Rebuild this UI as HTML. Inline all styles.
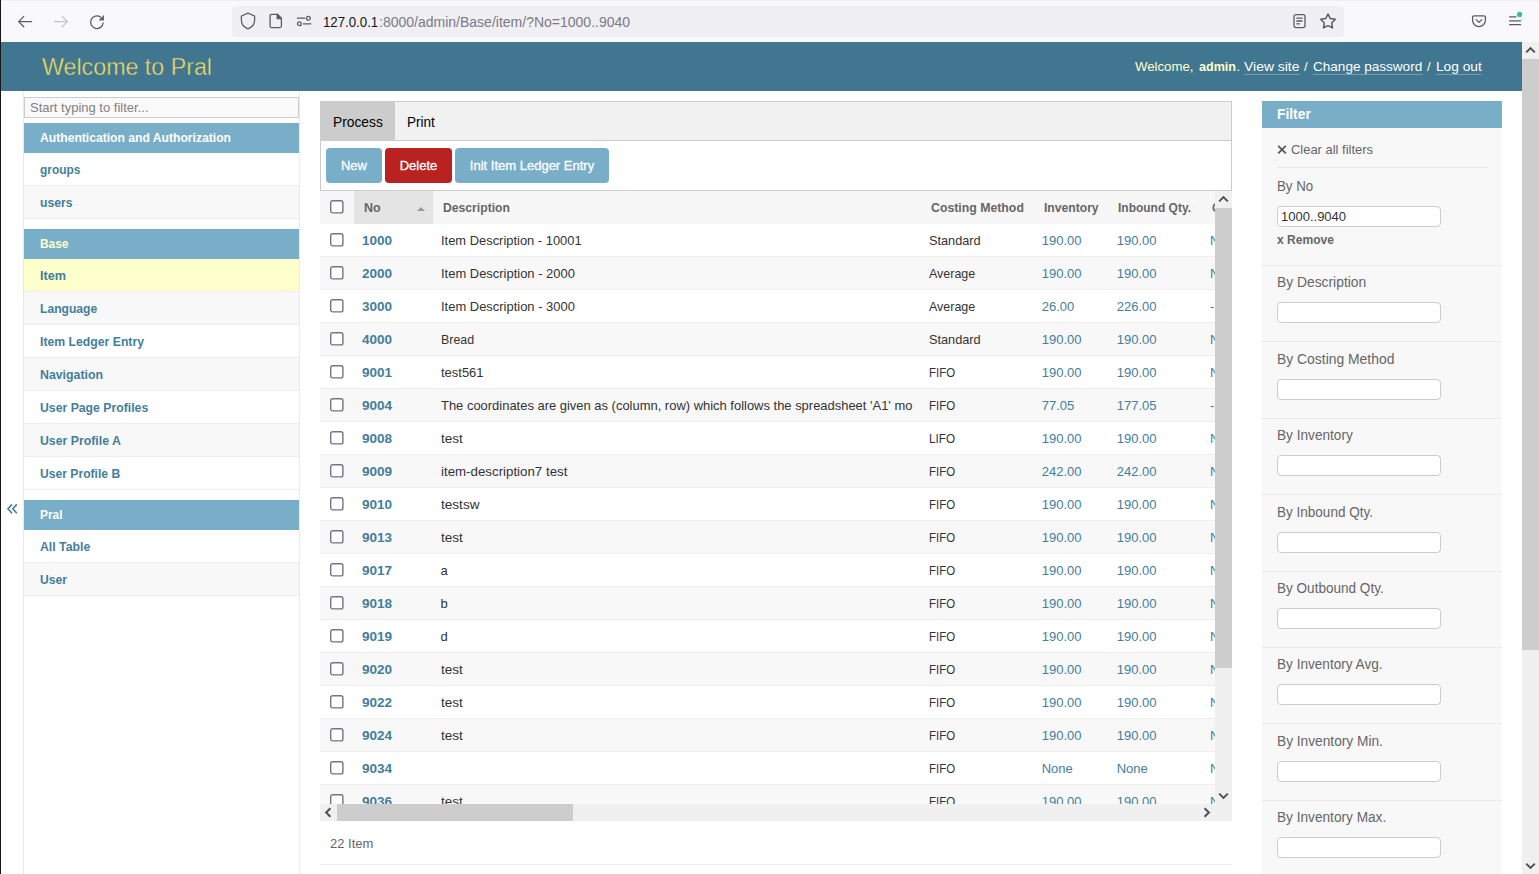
<!DOCTYPE html>
<html><head><meta charset="utf-8"><title>Select Item to change | Pral</title>
<style>
*{box-sizing:border-box;margin:0;padding:0}
html,body{width:1539px;height:874px;overflow:hidden;background:#fff}
body{font-family:"Liberation Sans",sans-serif;font-size:13px;color:#333;position:relative}
.abs{position:absolute}
.t{position:absolute;white-space:nowrap;line-height:1}
svg{position:absolute;overflow:visible}
/* browser chrome */
#chrome{left:0;top:0;width:1539px;height:42px;background:#f9f9fb}
#chrome-top{left:0;top:0;width:1539px;height:1px;background:#efeff2}
#urlbar{left:232px;top:6px;width:1112px;height:31px;background:#f0f0f4;border-radius:4px}
#leftedge{left:0;top:0;width:1px;height:874px;background:#161616}
/* header */
#header{left:1px;top:42px;width:1521px;height:49px;background:#417690}
/* page scrollbar */
#pscroll{left:1522px;top:42px;width:17px;height:832px;background:#f0f0f0}
#pthumb{left:1522px;top:59px;width:17px;height:591px;background:#cdcdcd}
/* sidebar */
#side{left:23px;top:91px;width:277px;height:783px;border-left:1px solid #eaeaea;border-right:1px solid #eaeaea;background:#fff}
.cap{position:absolute;left:24px;width:275px;height:30px;background:#79aec8}
.row{position:absolute;left:24px;width:275px;height:33px;border-bottom:1px solid #eee;background:#fff}
.row.alt{background:#f8f8f8}
.row.sel{background:#ffffcc}
.lnk{color:#447e9b;font-weight:bold}
.ul{padding-bottom:1px;border-bottom:1px solid rgba(255,255,255,.3);}
</style></head>
<body>
<div class="abs" id="chrome"></div><div class="abs" id="chrome-top"></div><div class="abs" id="urlbar"></div>
<svg style="left:17px;top:14px" width="16" height="16" viewBox="0 0 16 16" fill="none" stroke="#5b5b66" stroke-width="1.3" stroke-linecap="round" stroke-linejoin="round"><path d="M14.6 7.6H1.6M6.8 2.4 1.6 7.6 6.8 12.8"/></svg>
<svg style="left:53px;top:14px" width="16" height="16" viewBox="0 0 16 16" fill="none" stroke="#c4c4ca" stroke-width="1.3" stroke-linecap="round" stroke-linejoin="round"><path d="M1.4 7.6h13M9.200 2.400l5.200 5.200-5.200 5.200"/></svg>
<svg style="left:89px;top:14px" width="16" height="16" viewBox="0 0 16 16" fill="none" stroke="#5b5b66" stroke-width="1.3" stroke-linecap="round"><path d="M14.200 8.800A6.300 6.300 0 1 1 11.600 3.100"/><path d="M14.900 1v5.400H9.500z" fill="#5b5b66" stroke="none"/></svg>
<svg style="left:240px;top:12px" width="16" height="18" viewBox="0 0 16 18" fill="none" stroke="#5b5b66" stroke-width="1.3" stroke-linejoin="round"><path d="M8 1.2 1.4 4v4.2c0 4 2.6 7 6.6 8.6 4-1.6 6.600-4.6 6.600-8.600V4z"/></svg>
<svg style="left:269px;top:13px" width="14" height="16" viewBox="0 0 14 16" fill="none" stroke="#5b5b66" stroke-width="1.3" stroke-linejoin="round"><path d="M2.600 1.300h5.600L12.400 5.500v7.600a1.500 1.500 0 0 1-1.500 1.500H2.600A1.500 1.500 0 0 1 1.100 13.100V2.800A1.500 1.500 0 0 1 2.600 1.300z"/><path d="M8.200 1.300v4.200h4.200z" fill="#5b5b66"/></svg>
<svg style="left:296px;top:14px" width="16" height="14" viewBox="0 0 16 14" fill="none" stroke="#5b5b66" stroke-width="1.3" stroke-linecap="round"><path d="M1.400 4.200h7.400"/><circle cx="12.400" cy="4.200" r="1.900"/><path d="M7.400 9.800h7.400"/><circle cx="3.400" cy="9.800" r="1.900"/></svg>
<div class="t " style="left:323.2px;top:15px;font-size:14px;color:#15141a;transform:scaleX(0.9454);transform-origin:0 0;">127.0.0.1</div>
<div class="t " style="left:379.3px;top:15px;font-size:14px;color:#7a7a85;transform:scaleX(1.0003);transform-origin:0 0;">:8000/admin/Base/item/?No=1000..9040</div>
<svg style="left:1292px;top:13px" width="15" height="16" viewBox="0 0 15 16" fill="none" stroke="#5b5b66" stroke-width="1.3" stroke-linecap="round" stroke-linejoin="round"><rect x="2" y="1.600" width="11" height="13" rx="2"/><path d="M4.800 5.200h5.200M4.800 8h5.200M4.800 10.800h2.800"/></svg>
<svg style="left:1319px;top:12px" width="18" height="18" viewBox="0 0 18 18" fill="none" stroke="#5b5b66" stroke-width="1.500" stroke-linejoin="round"><path d="M9.00 2.00 L11.29 6.54 L16.32 7.32 L12.71 10.91 L13.53 15.93 L9.00 13.60 L4.47 15.93 L5.29 10.91 L1.68 7.32 L6.71 6.54z"/></svg>
<svg style="left:1471px;top:14px" width="16" height="15" viewBox="0 0 16 15" fill="none" stroke="#5b5b66" stroke-width="1.300" stroke-linecap="round" stroke-linejoin="round"><path d="M3 1.800h10a1.400 1.400 0 0 1 1.400 1.400v3a6.400 6.400 0 0 1-12.800 0v-3A1.400 1.400 0 0 1 3 1.800z"/><path d="M5.200 5.600l2.800 2.800 2.800-2.800"/></svg>
<svg style="left:1508px;top:12px" width="16" height="16" viewBox="0 0 16 16" fill="none" stroke="#5b5b66" stroke-width="1.300" stroke-linecap="round"><path d="M1.600 4.800h6.400M1.600 8.800h11M1.600 12.700h11"/><circle cx="11.600" cy="2.400" r="2.600" fill="#2ac3a2" stroke="none"/></svg>
<div class="abs" id="header"></div>
<div class="t " style="left:41.5px;top:55px;font-size:24px;color:#f5dd5d;transform:scaleX(0.9680);transform-origin:0 0;-webkit-text-stroke:0.450px #417690;">Welcome to Pral</div>
<div class="t " style="left:1135px;top:60px;font-size:13px;color:#ffc;transform:scaleX(1.0163);transform-origin:0 0;">Welcome,</div>
<div class="t " style="left:1198.5px;top:60px;font-size:13px;color:#ffc;font-weight:bold;transform:scaleX(0.9661);transform-origin:0 0;">admin</div>
<div class="t " style="left:1236.5px;top:60px;font-size:13px;color:#ffc;">.</div>
<div class="t ul" style="left:1243.5px;top:60px;font-size:13px;color:#fff;transform:scaleX(1.0715);transform-origin:0 0;">View site</div>
<div class="t " style="left:1304px;top:60px;font-size:13px;color:#ffc;">/</div>
<div class="t ul" style="left:1312.5px;top:60px;font-size:13px;color:#fff;transform:scaleX(1.0420);transform-origin:0 0;">Change password</div>
<div class="t " style="left:1427px;top:60px;font-size:13px;color:#ffc;">/</div>
<div class="t ul" style="left:1436px;top:60px;font-size:13px;color:#fff;transform:scaleX(1.0536);transform-origin:0 0;">Log out</div>
<div class="abs" id="pscroll"></div><div class="abs" id="pthumb"></div>
<svg style="left:1525px;top:46px" width="11" height="8" viewBox="0 0 11 8" fill="none" stroke="#505050" stroke-width="2"><path d="M1.200 6.400 5.500 2.100 9.800 6.400"/></svg>
<svg style="left:1525px;top:862px" width="11" height="8" viewBox="0 0 11 8" fill="none" stroke="#505050" stroke-width="2"><path d="M1.200 1.600 5.500 5.900 9.800 1.600"/></svg>
<div class="abs" id="side"></div>
<div class="abs" style="left:24px;top:97px;width:275px;height:21px;border:1px solid #ccc;background:#fafafa"></div>
<div class="t " style="left:30px;top:101px;font-size:13px;color:#808080;">Start typing to filter...</div>
<div class="cap" style="top:123px"></div>
<div class="t " style="left:40px;top:131px;font-size:13px;color:#fff;font-weight:bold;transform:scaleX(0.9334);transform-origin:0 0;">Authentication and Authorization</div>
<div class="row" style="top:153px"></div>
<div class="t " style="left:40px;top:163px;font-size:13px;color:#447e9b;font-weight:bold;transform:scaleX(0.9191);transform-origin:0 0;">groups</div>
<div class="row alt" style="top:186px"></div>
<div class="t " style="left:40px;top:196px;font-size:13px;color:#447e9b;font-weight:bold;transform:scaleX(0.9365);transform-origin:0 0;">users</div>
<div class="cap" style="top:229px"></div>
<div class="t " style="left:40px;top:237px;font-size:13px;color:#ffc;font-weight:bold;transform:scaleX(0.9170);transform-origin:0 0;">Base</div>
<div class="row sel" style="top:259px"></div>
<div class="t " style="left:40px;top:269px;font-size:13px;color:#447e9b;font-weight:bold;transform:scaleX(0.9725);transform-origin:0 0;">Item</div>
<div class="row alt" style="top:292px"></div>
<div class="t " style="left:40px;top:302px;font-size:13px;color:#447e9b;font-weight:bold;transform:scaleX(0.9315);transform-origin:0 0;">Language</div>
<div class="row" style="top:325px"></div>
<div class="t " style="left:40px;top:335px;font-size:13px;color:#447e9b;font-weight:bold;transform:scaleX(0.9409);transform-origin:0 0;">Item Ledger Entry</div>
<div class="row alt" style="top:358px"></div>
<div class="t " style="left:40px;top:368px;font-size:13px;color:#447e9b;font-weight:bold;transform:scaleX(0.9478);transform-origin:0 0;">Navigation</div>
<div class="row" style="top:391px"></div>
<div class="t " style="left:40px;top:401px;font-size:13px;color:#447e9b;font-weight:bold;transform:scaleX(0.9418);transform-origin:0 0;">User Page Profiles</div>
<div class="row alt" style="top:424px"></div>
<div class="t " style="left:40px;top:434px;font-size:13px;color:#447e9b;font-weight:bold;transform:scaleX(0.9450);transform-origin:0 0;">User Profile A</div>
<div class="row" style="top:457px"></div>
<div class="t " style="left:40px;top:467px;font-size:13px;color:#447e9b;font-weight:bold;transform:scaleX(0.9327);transform-origin:0 0;">User Profile B</div>
<div class="cap" style="top:500px"></div>
<div class="t " style="left:40px;top:508px;font-size:13px;color:#fff;font-weight:bold;transform:scaleX(0.9154);transform-origin:0 0;">Pral</div>
<div class="row" style="top:530px"></div>
<div class="t " style="left:40px;top:540px;font-size:13px;color:#447e9b;font-weight:bold;transform:scaleX(0.9433);transform-origin:0 0;">All Table</div>
<div class="row alt" style="top:563px"></div>
<div class="t " style="left:40px;top:573px;font-size:13px;color:#447e9b;font-weight:bold;transform:scaleX(0.9335);transform-origin:0 0;">User</div>
<svg style="left:0;top:500px" width="24" height="18" viewBox="0 0 24 18" fill="none" stroke="#447e9b" stroke-width="1.600"><path d="M12 4.400 8 8.800 12 13.200M16.800 4.400 12.800 8.800 16.800 13.200"/></svg>
<div class="abs " style="left:320px;top:101px;width:912px;height:40px;background:#f1f1f1;border:1px solid #ccc;"></div>
<div class="abs " style="left:321px;top:102px;width:74px;height:38px;background:#ccc;"></div>
<div class="t " style="left:333px;top:114px;font-size:15px;color:#000;transform:scaleX(0.9190);transform-origin:0 0;">Process</div>
<div class="t " style="left:407px;top:114px;font-size:15px;color:#000;transform:scaleX(0.9013);transform-origin:0 0;">Print</div>
<div class="abs " style="left:320px;top:140px;width:912px;height:51px;background:#fff;border:1px solid #ccc;"></div>
<div class="abs" style="left:326px;top:148px;width:56px;height:35px;background:#79aec8;border-radius:4px;color:#fff;font-size:13px;text-align:center;line-height:35px;-webkit-text-stroke:0.300px #fff">New</div>
<div class="abs" style="left:385px;top:148px;width:67px;height:35px;background:#ba2121;border-radius:4px;color:#fff;font-size:13px;text-align:center;line-height:35px;-webkit-text-stroke:0.300px #fff">Delete</div>
<div class="abs" style="left:455px;top:148px;width:154px;height:35px;background:#79aec8;border-radius:4px;color:#fff;font-size:13px;text-align:center;line-height:35px;-webkit-text-stroke:0.300px #fff">Init Item Ledger Entry</div>
<div class="abs" id="tbl" style="left:320px;top:191px;width:895px;height:613px;overflow:hidden">
<div class="abs" style="left:0;top:0;width:895px;height:33px;background:#f7f7f7"></div>
<div class="abs" style="left:34px;top:0;width:79px;height:33px;background:#e4e4e4"></div>
<svg style="left:10.3px;top:9.4px" width="14" height="14" viewBox="0 0 14 14"><rect x="0.700" y="0.700" width="12.200" height="12.200" rx="2" fill="#fff" stroke="#74738a" stroke-width="1.400"/></svg>
<div class="t " style="left:44.39999999999998px;top:11px;font-size:12px;color:#666;font-weight:bold;transform:scaleX(1.0375);transform-origin:0 0;">No</div>
<div class="t " style="left:122.5px;top:11px;font-size:12px;color:#666;font-weight:bold;transform:scaleX(1.0149);transform-origin:0 0;">Description</div>
<div class="t " style="left:610.5px;top:11px;font-size:12px;color:#666;font-weight:bold;transform:scaleX(1.0248);transform-origin:0 0;">Costing Method</div>
<div class="t " style="left:723.5999999999999px;top:11px;font-size:12px;color:#666;font-weight:bold;transform:scaleX(1.0108);transform-origin:0 0;">Inventory</div>
<div class="t " style="left:798.4000000000001px;top:11px;font-size:12px;color:#666;font-weight:bold;transform:scaleX(0.9985);transform-origin:0 0;">Inbound Qty.</div>
<div class="t " style="left:891.5px;top:11px;font-size:12px;color:#666;font-weight:bold;transform:scaleX(0.9507);transform-origin:0 0;">Outbound Qty.</div>
<div class="abs" style="left:97px;top:16px;width:0;height:0;border-left:4px solid transparent;border-right:4px solid transparent;border-bottom:4px solid #999"></div>
<div class="abs" style="left:0;top:33px;width:895px;height:33px;background:#fff;border-bottom:1px solid #eee"></div>
<svg style="left:10.3px;top:42.4px" width="14" height="14" viewBox="0 0 14 14"><rect x="0.700" y="0.700" width="12.200" height="12.200" rx="2" fill="#fff" stroke="#74738a" stroke-width="1.400"/></svg>
<div class="t " style="left:41.69999999999999px;top:43px;font-size:13px;color:#447e9b;font-weight:bold;transform:scaleX(1.0407);transform-origin:0 0;">1000</div>
<div class="t " style="left:120.60000000000002px;top:43px;font-size:13px;color:#333;transform:scaleX(0.9928);transform-origin:0 0;">Item Description - 10001</div>
<div class="t " style="left:608.6px;top:43px;font-size:13px;color:#333;transform:scaleX(0.9798);transform-origin:0 0;">Standard</div>
<div class="t" style="left:721.7px;top:43px;font-size:13px;color:#447e9b">190.00</div>
<div class="t" style="left:796.7px;top:43px;font-size:13px;color:#447e9b">190.00</div>
<div class="t" style="left:890px;top:43px;font-size:13px;color:#447e9b">None</div>
<div class="abs" style="left:0;top:66px;width:895px;height:33px;background:#f8f8f8;border-bottom:1px solid #eee"></div>
<svg style="left:10.3px;top:75.4px" width="14" height="14" viewBox="0 0 14 14"><rect x="0.700" y="0.700" width="12.200" height="12.200" rx="2" fill="#fff" stroke="#74738a" stroke-width="1.400"/></svg>
<div class="t " style="left:41.69999999999999px;top:76px;font-size:13px;color:#447e9b;font-weight:bold;transform:scaleX(1.0407);transform-origin:0 0;">2000</div>
<div class="t " style="left:120.60000000000002px;top:76px;font-size:13px;color:#333;transform:scaleX(0.9962);transform-origin:0 0;">Item Description - 2000</div>
<div class="t " style="left:608.6px;top:76px;font-size:13px;color:#333;transform:scaleX(0.9588);transform-origin:0 0;">Average</div>
<div class="t" style="left:721.7px;top:76px;font-size:13px;color:#447e9b">190.00</div>
<div class="t" style="left:796.7px;top:76px;font-size:13px;color:#447e9b">190.00</div>
<div class="t" style="left:890px;top:76px;font-size:13px;color:#447e9b">None</div>
<div class="abs" style="left:0;top:99px;width:895px;height:33px;background:#fff;border-bottom:1px solid #eee"></div>
<svg style="left:10.3px;top:108.4px" width="14" height="14" viewBox="0 0 14 14"><rect x="0.700" y="0.700" width="12.200" height="12.200" rx="2" fill="#fff" stroke="#74738a" stroke-width="1.400"/></svg>
<div class="t " style="left:41.69999999999999px;top:109px;font-size:13px;color:#447e9b;font-weight:bold;transform:scaleX(1.0407);transform-origin:0 0;">3000</div>
<div class="t " style="left:120.60000000000002px;top:109px;font-size:13px;color:#333;transform:scaleX(0.9962);transform-origin:0 0;">Item Description - 3000</div>
<div class="t " style="left:608.6px;top:109px;font-size:13px;color:#333;transform:scaleX(0.9588);transform-origin:0 0;">Average</div>
<div class="t" style="left:721.7px;top:109px;font-size:13px;color:#447e9b">26.00</div>
<div class="t" style="left:796.7px;top:109px;font-size:13px;color:#447e9b">226.00</div>
<div class="t" style="left:890px;top:109px;font-size:13px;color:#447e9b">-200.00</div>
<div class="abs" style="left:0;top:132px;width:895px;height:33px;background:#f8f8f8;border-bottom:1px solid #eee"></div>
<svg style="left:10.3px;top:141.4px" width="14" height="14" viewBox="0 0 14 14"><rect x="0.700" y="0.700" width="12.200" height="12.200" rx="2" fill="#fff" stroke="#74738a" stroke-width="1.400"/></svg>
<div class="t " style="left:41.69999999999999px;top:142px;font-size:13px;color:#447e9b;font-weight:bold;transform:scaleX(1.0407);transform-origin:0 0;">4000</div>
<div class="t " style="left:120.60000000000002px;top:142px;font-size:13px;color:#333;transform:scaleX(0.9538);transform-origin:0 0;">Bread</div>
<div class="t " style="left:608.6px;top:142px;font-size:13px;color:#333;transform:scaleX(0.9798);transform-origin:0 0;">Standard</div>
<div class="t" style="left:721.7px;top:142px;font-size:13px;color:#447e9b">190.00</div>
<div class="t" style="left:796.7px;top:142px;font-size:13px;color:#447e9b">190.00</div>
<div class="t" style="left:890px;top:142px;font-size:13px;color:#447e9b">None</div>
<div class="abs" style="left:0;top:165px;width:895px;height:33px;background:#fff;border-bottom:1px solid #eee"></div>
<svg style="left:10.3px;top:174.4px" width="14" height="14" viewBox="0 0 14 14"><rect x="0.700" y="0.700" width="12.200" height="12.200" rx="2" fill="#fff" stroke="#74738a" stroke-width="1.400"/></svg>
<div class="t " style="left:41.69999999999999px;top:175px;font-size:13px;color:#447e9b;font-weight:bold;transform:scaleX(1.0407);transform-origin:0 0;">9001</div>
<div class="t " style="left:120.60000000000002px;top:175px;font-size:13px;color:#333;transform:scaleX(0.9963);transform-origin:0 0;">test561</div>
<div class="t " style="left:608.6px;top:175px;font-size:13px;color:#333;transform:scaleX(0.8815);transform-origin:0 0;">FIFO</div>
<div class="t" style="left:721.7px;top:175px;font-size:13px;color:#447e9b">190.00</div>
<div class="t" style="left:796.7px;top:175px;font-size:13px;color:#447e9b">190.00</div>
<div class="t" style="left:890px;top:175px;font-size:13px;color:#447e9b">None</div>
<div class="abs" style="left:0;top:198px;width:895px;height:33px;background:#f8f8f8;border-bottom:1px solid #eee"></div>
<svg style="left:10.3px;top:207.4px" width="14" height="14" viewBox="0 0 14 14"><rect x="0.700" y="0.700" width="12.200" height="12.200" rx="2" fill="#fff" stroke="#74738a" stroke-width="1.400"/></svg>
<div class="t " style="left:41.69999999999999px;top:208px;font-size:13px;color:#447e9b;font-weight:bold;transform:scaleX(1.0407);transform-origin:0 0;">9004</div>
<div class="t " style="left:120.60000000000002px;top:208px;font-size:13px;color:#333;transform:scaleX(0.9962);transform-origin:0 0;">The coordinates are given as (column, row) which follows the spreadsheet 'A1' mo</div>
<div class="t " style="left:608.6px;top:208px;font-size:13px;color:#333;transform:scaleX(0.8815);transform-origin:0 0;">FIFO</div>
<div class="t" style="left:721.7px;top:208px;font-size:13px;color:#447e9b">77.05</div>
<div class="t" style="left:796.7px;top:208px;font-size:13px;color:#447e9b">177.05</div>
<div class="t" style="left:890px;top:208px;font-size:13px;color:#447e9b">-100.00</div>
<div class="abs" style="left:0;top:231px;width:895px;height:33px;background:#fff;border-bottom:1px solid #eee"></div>
<svg style="left:10.3px;top:240.4px" width="14" height="14" viewBox="0 0 14 14"><rect x="0.700" y="0.700" width="12.200" height="12.200" rx="2" fill="#fff" stroke="#74738a" stroke-width="1.400"/></svg>
<div class="t " style="left:41.69999999999999px;top:241px;font-size:13px;color:#447e9b;font-weight:bold;transform:scaleX(1.0407);transform-origin:0 0;">9008</div>
<div class="t " style="left:120.60000000000002px;top:241px;font-size:13px;color:#333;transform:scaleX(1.0396);transform-origin:0 0;">test</div>
<div class="t " style="left:608.6px;top:241px;font-size:13px;color:#333;transform:scaleX(0.9029);transform-origin:0 0;">LIFO</div>
<div class="t" style="left:721.7px;top:241px;font-size:13px;color:#447e9b">190.00</div>
<div class="t" style="left:796.7px;top:241px;font-size:13px;color:#447e9b">190.00</div>
<div class="t" style="left:890px;top:241px;font-size:13px;color:#447e9b">None</div>
<div class="abs" style="left:0;top:264px;width:895px;height:33px;background:#f8f8f8;border-bottom:1px solid #eee"></div>
<svg style="left:10.3px;top:273.4px" width="14" height="14" viewBox="0 0 14 14"><rect x="0.700" y="0.700" width="12.200" height="12.200" rx="2" fill="#fff" stroke="#74738a" stroke-width="1.400"/></svg>
<div class="t " style="left:41.69999999999999px;top:274px;font-size:13px;color:#447e9b;font-weight:bold;transform:scaleX(1.0407);transform-origin:0 0;">9009</div>
<div class="t " style="left:120.60000000000002px;top:274px;font-size:13px;color:#333;transform:scaleX(1.0230);transform-origin:0 0;">item-description7 test</div>
<div class="t " style="left:608.6px;top:274px;font-size:13px;color:#333;transform:scaleX(0.8815);transform-origin:0 0;">FIFO</div>
<div class="t" style="left:721.7px;top:274px;font-size:13px;color:#447e9b">242.00</div>
<div class="t" style="left:796.7px;top:274px;font-size:13px;color:#447e9b">242.00</div>
<div class="t" style="left:890px;top:274px;font-size:13px;color:#447e9b">None</div>
<div class="abs" style="left:0;top:297px;width:895px;height:33px;background:#fff;border-bottom:1px solid #eee"></div>
<svg style="left:10.3px;top:306.4px" width="14" height="14" viewBox="0 0 14 14"><rect x="0.700" y="0.700" width="12.200" height="12.200" rx="2" fill="#fff" stroke="#74738a" stroke-width="1.400"/></svg>
<div class="t " style="left:41.69999999999999px;top:307px;font-size:13px;color:#447e9b;font-weight:bold;transform:scaleX(1.0407);transform-origin:0 0;">9010</div>
<div class="t " style="left:120.60000000000002px;top:307px;font-size:13px;color:#333;transform:scaleX(1.0450);transform-origin:0 0;">testsw</div>
<div class="t " style="left:608.6px;top:307px;font-size:13px;color:#333;transform:scaleX(0.8815);transform-origin:0 0;">FIFO</div>
<div class="t" style="left:721.7px;top:307px;font-size:13px;color:#447e9b">190.00</div>
<div class="t" style="left:796.7px;top:307px;font-size:13px;color:#447e9b">190.00</div>
<div class="t" style="left:890px;top:307px;font-size:13px;color:#447e9b">None</div>
<div class="abs" style="left:0;top:330px;width:895px;height:33px;background:#f8f8f8;border-bottom:1px solid #eee"></div>
<svg style="left:10.3px;top:339.4px" width="14" height="14" viewBox="0 0 14 14"><rect x="0.700" y="0.700" width="12.200" height="12.200" rx="2" fill="#fff" stroke="#74738a" stroke-width="1.400"/></svg>
<div class="t " style="left:41.69999999999999px;top:340px;font-size:13px;color:#447e9b;font-weight:bold;transform:scaleX(1.0407);transform-origin:0 0;">9013</div>
<div class="t " style="left:120.60000000000002px;top:340px;font-size:13px;color:#333;transform:scaleX(1.0396);transform-origin:0 0;">test</div>
<div class="t " style="left:608.6px;top:340px;font-size:13px;color:#333;transform:scaleX(0.8815);transform-origin:0 0;">FIFO</div>
<div class="t" style="left:721.7px;top:340px;font-size:13px;color:#447e9b">190.00</div>
<div class="t" style="left:796.7px;top:340px;font-size:13px;color:#447e9b">190.00</div>
<div class="t" style="left:890px;top:340px;font-size:13px;color:#447e9b">None</div>
<div class="abs" style="left:0;top:363px;width:895px;height:33px;background:#fff;border-bottom:1px solid #eee"></div>
<svg style="left:10.3px;top:372.4px" width="14" height="14" viewBox="0 0 14 14"><rect x="0.700" y="0.700" width="12.200" height="12.200" rx="2" fill="#fff" stroke="#74738a" stroke-width="1.400"/></svg>
<div class="t " style="left:41.69999999999999px;top:373px;font-size:13px;color:#447e9b;font-weight:bold;transform:scaleX(1.0407);transform-origin:0 0;">9017</div>
<div class="t " style="left:120.60000000000002px;top:373px;font-size:13px;color:#333;">a</div>
<div class="t " style="left:608.6px;top:373px;font-size:13px;color:#333;transform:scaleX(0.8815);transform-origin:0 0;">FIFO</div>
<div class="t" style="left:721.7px;top:373px;font-size:13px;color:#447e9b">190.00</div>
<div class="t" style="left:796.7px;top:373px;font-size:13px;color:#447e9b">190.00</div>
<div class="t" style="left:890px;top:373px;font-size:13px;color:#447e9b">None</div>
<div class="abs" style="left:0;top:396px;width:895px;height:33px;background:#f8f8f8;border-bottom:1px solid #eee"></div>
<svg style="left:10.3px;top:405.4px" width="14" height="14" viewBox="0 0 14 14"><rect x="0.700" y="0.700" width="12.200" height="12.200" rx="2" fill="#fff" stroke="#74738a" stroke-width="1.400"/></svg>
<div class="t " style="left:41.69999999999999px;top:406px;font-size:13px;color:#447e9b;font-weight:bold;transform:scaleX(1.0407);transform-origin:0 0;">9018</div>
<div class="t " style="left:120.60000000000002px;top:406px;font-size:13px;color:#333;">b</div>
<div class="t " style="left:608.6px;top:406px;font-size:13px;color:#333;transform:scaleX(0.8815);transform-origin:0 0;">FIFO</div>
<div class="t" style="left:721.7px;top:406px;font-size:13px;color:#447e9b">190.00</div>
<div class="t" style="left:796.7px;top:406px;font-size:13px;color:#447e9b">190.00</div>
<div class="t" style="left:890px;top:406px;font-size:13px;color:#447e9b">None</div>
<div class="abs" style="left:0;top:429px;width:895px;height:33px;background:#fff;border-bottom:1px solid #eee"></div>
<svg style="left:10.3px;top:438.4px" width="14" height="14" viewBox="0 0 14 14"><rect x="0.700" y="0.700" width="12.200" height="12.200" rx="2" fill="#fff" stroke="#74738a" stroke-width="1.400"/></svg>
<div class="t " style="left:41.69999999999999px;top:439px;font-size:13px;color:#447e9b;font-weight:bold;transform:scaleX(1.0407);transform-origin:0 0;">9019</div>
<div class="t " style="left:120.60000000000002px;top:439px;font-size:13px;color:#333;">d</div>
<div class="t " style="left:608.6px;top:439px;font-size:13px;color:#333;transform:scaleX(0.8815);transform-origin:0 0;">FIFO</div>
<div class="t" style="left:721.7px;top:439px;font-size:13px;color:#447e9b">190.00</div>
<div class="t" style="left:796.7px;top:439px;font-size:13px;color:#447e9b">190.00</div>
<div class="t" style="left:890px;top:439px;font-size:13px;color:#447e9b">None</div>
<div class="abs" style="left:0;top:462px;width:895px;height:33px;background:#f8f8f8;border-bottom:1px solid #eee"></div>
<svg style="left:10.3px;top:471.4px" width="14" height="14" viewBox="0 0 14 14"><rect x="0.700" y="0.700" width="12.200" height="12.200" rx="2" fill="#fff" stroke="#74738a" stroke-width="1.400"/></svg>
<div class="t " style="left:41.69999999999999px;top:472px;font-size:13px;color:#447e9b;font-weight:bold;transform:scaleX(1.0407);transform-origin:0 0;">9020</div>
<div class="t " style="left:120.60000000000002px;top:472px;font-size:13px;color:#333;transform:scaleX(1.0396);transform-origin:0 0;">test</div>
<div class="t " style="left:608.6px;top:472px;font-size:13px;color:#333;transform:scaleX(0.8815);transform-origin:0 0;">FIFO</div>
<div class="t" style="left:721.7px;top:472px;font-size:13px;color:#447e9b">190.00</div>
<div class="t" style="left:796.7px;top:472px;font-size:13px;color:#447e9b">190.00</div>
<div class="t" style="left:890px;top:472px;font-size:13px;color:#447e9b">None</div>
<div class="abs" style="left:0;top:495px;width:895px;height:33px;background:#fff;border-bottom:1px solid #eee"></div>
<svg style="left:10.3px;top:504.4px" width="14" height="14" viewBox="0 0 14 14"><rect x="0.700" y="0.700" width="12.200" height="12.200" rx="2" fill="#fff" stroke="#74738a" stroke-width="1.400"/></svg>
<div class="t " style="left:41.69999999999999px;top:505px;font-size:13px;color:#447e9b;font-weight:bold;transform:scaleX(1.0407);transform-origin:0 0;">9022</div>
<div class="t " style="left:120.60000000000002px;top:505px;font-size:13px;color:#333;transform:scaleX(1.0396);transform-origin:0 0;">test</div>
<div class="t " style="left:608.6px;top:505px;font-size:13px;color:#333;transform:scaleX(0.8815);transform-origin:0 0;">FIFO</div>
<div class="t" style="left:721.7px;top:505px;font-size:13px;color:#447e9b">190.00</div>
<div class="t" style="left:796.7px;top:505px;font-size:13px;color:#447e9b">190.00</div>
<div class="t" style="left:890px;top:505px;font-size:13px;color:#447e9b">None</div>
<div class="abs" style="left:0;top:528px;width:895px;height:33px;background:#f8f8f8;border-bottom:1px solid #eee"></div>
<svg style="left:10.3px;top:537.4px" width="14" height="14" viewBox="0 0 14 14"><rect x="0.700" y="0.700" width="12.200" height="12.200" rx="2" fill="#fff" stroke="#74738a" stroke-width="1.400"/></svg>
<div class="t " style="left:41.69999999999999px;top:538px;font-size:13px;color:#447e9b;font-weight:bold;transform:scaleX(1.0407);transform-origin:0 0;">9024</div>
<div class="t " style="left:120.60000000000002px;top:538px;font-size:13px;color:#333;transform:scaleX(1.0396);transform-origin:0 0;">test</div>
<div class="t " style="left:608.6px;top:538px;font-size:13px;color:#333;transform:scaleX(0.8815);transform-origin:0 0;">FIFO</div>
<div class="t" style="left:721.7px;top:538px;font-size:13px;color:#447e9b">190.00</div>
<div class="t" style="left:796.7px;top:538px;font-size:13px;color:#447e9b">190.00</div>
<div class="t" style="left:890px;top:538px;font-size:13px;color:#447e9b">None</div>
<div class="abs" style="left:0;top:561px;width:895px;height:33px;background:#fff;border-bottom:1px solid #eee"></div>
<svg style="left:10.3px;top:570.4px" width="14" height="14" viewBox="0 0 14 14"><rect x="0.700" y="0.700" width="12.200" height="12.200" rx="2" fill="#fff" stroke="#74738a" stroke-width="1.400"/></svg>
<div class="t " style="left:41.69999999999999px;top:571px;font-size:13px;color:#447e9b;font-weight:bold;transform:scaleX(1.0407);transform-origin:0 0;">9034</div>
<div class="t " style="left:120.60000000000002px;top:571px;font-size:13px;color:#333;"></div>
<div class="t " style="left:608.6px;top:571px;font-size:13px;color:#333;transform:scaleX(0.8815);transform-origin:0 0;">FIFO</div>
<div class="t" style="left:721.7px;top:571px;font-size:13px;color:#447e9b">None</div>
<div class="t" style="left:796.7px;top:571px;font-size:13px;color:#447e9b">None</div>
<div class="t" style="left:890px;top:571px;font-size:13px;color:#447e9b">None</div>
<div class="abs" style="left:0;top:594px;width:895px;height:33px;background:#f8f8f8;border-bottom:1px solid #eee"></div>
<svg style="left:10.3px;top:603.4px" width="14" height="14" viewBox="0 0 14 14"><rect x="0.700" y="0.700" width="12.200" height="12.200" rx="2" fill="#fff" stroke="#74738a" stroke-width="1.400"/></svg>
<div class="t " style="left:41.69999999999999px;top:604px;font-size:13px;color:#447e9b;font-weight:bold;transform:scaleX(1.0407);transform-origin:0 0;">9036</div>
<div class="t " style="left:120.60000000000002px;top:604px;font-size:13px;color:#333;transform:scaleX(1.0396);transform-origin:0 0;">test</div>
<div class="t " style="left:608.6px;top:604px;font-size:13px;color:#333;transform:scaleX(0.8815);transform-origin:0 0;">FIFO</div>
<div class="t" style="left:721.7px;top:604px;font-size:13px;color:#447e9b">190.00</div>
<div class="t" style="left:796.7px;top:604px;font-size:13px;color:#447e9b">190.00</div>
<div class="t" style="left:890px;top:604px;font-size:13px;color:#447e9b">None</div>
</div>
<div class="abs " style="left:1215px;top:191px;width:17px;height:613px;background:#f0f0f0;"></div>
<div class="abs " style="left:1215px;top:208px;width:17px;height:460px;background:#cdcdcd;"></div>
<svg style="left:1218px;top:195px" width="11" height="8" viewBox="0 0 11 8" fill="none" stroke="#505050" stroke-width="2"><path d="M1.200 6.400 5.500 2.100 9.800 6.400"/></svg>
<svg style="left:1218px;top:792px" width="11" height="8" viewBox="0 0 11 8" fill="none" stroke="#505050" stroke-width="2"><path d="M1.200 1.600 5.500 5.900 9.800 1.600"/></svg>
<div class="abs " style="left:320px;top:804px;width:912px;height:17px;background:#f0f0f0;"></div>
<div class="abs " style="left:337px;top:804px;width:236px;height:17px;background:#cdcdcd;"></div>
<svg style="left:324px;top:807px" width="8" height="11" viewBox="0 0 8 11" fill="none" stroke="#505050" stroke-width="2"><path d="M6.400 1.200 2.100 5.500 6.400 9.800"/></svg>
<svg style="left:1203px;top:807px" width="8" height="11" viewBox="0 0 8 11" fill="none" stroke="#505050" stroke-width="2"><path d="M1.600 1.200 5.900 5.500 1.600 9.800"/></svg>
<div class="t " style="left:330px;top:837px;font-size:13px;color:#666;">22 Item</div>
<div class="abs " style="left:320px;top:864px;width:912px;height:1px;background:#eee;"></div>
<div class="abs " style="left:1262px;top:101px;width:240px;height:773px;background:#f8f8f8;"></div>
<div class="abs " style="left:1262px;top:101px;width:240px;height:27px;background:#79aec8;"></div>
<div class="t " style="left:1277.4px;top:107px;font-size:14px;color:#fff;font-weight:bold;transform:scaleX(0.9873);transform-origin:0 0;">Filter</div>
<svg style="left:1277px;top:145px" width="10" height="9" viewBox="0 0 10 9" fill="none" stroke="#555" stroke-width="1.700"><path d="M1.200 0.800 8.800 8.400M8.800 0.800 1.200 8.400"/></svg>
<div class="t " style="left:1291px;top:143px;font-size:13px;color:#666;transform:scaleX(0.9956);transform-origin:0 0;">Clear all filters</div>
<div class="abs " style="left:1277px;top:167px;width:211px;height:1px;background:#eaeaea;"></div>
<div class="t " style="left:1277.3px;top:179px;font-size:14px;color:#666;transform:scaleX(0.9495);transform-origin:0 0;">By No</div>
<div class="abs" style="left:1277px;top:206px;width:164px;height:21px;border:1px solid #ccc;border-radius:4px;background:#fff;font-size:13px;line-height:19px;padding-left:3px;color:#333">1000..9040</div>
<div class="abs " style="left:1262px;top:265px;width:240px;height:1px;background:#eaeaea;"></div>
<div class="t " style="left:1277.3px;top:275px;font-size:14px;color:#666;transform:scaleX(0.9882);transform-origin:0 0;">By Description</div>
<div class="abs" style="left:1277px;top:302px;width:164px;height:21px;border:1px solid #ccc;border-radius:4px;background:#fff;font-size:13px;line-height:19px;padding-left:3px;color:#333"></div>
<div class="abs " style="left:1262px;top:341px;width:240px;height:1px;background:#eaeaea;"></div>
<div class="t " style="left:1277.3px;top:352px;font-size:14px;color:#666;transform:scaleX(0.9924);transform-origin:0 0;">By Costing Method</div>
<div class="abs" style="left:1277px;top:379px;width:164px;height:21px;border:1px solid #ccc;border-radius:4px;background:#fff;font-size:13px;line-height:19px;padding-left:3px;color:#333"></div>
<div class="abs " style="left:1262px;top:418px;width:240px;height:1px;background:#eaeaea;"></div>
<div class="t " style="left:1277.3px;top:428px;font-size:14px;color:#666;transform:scaleX(0.9739);transform-origin:0 0;">By Inventory</div>
<div class="abs" style="left:1277px;top:455px;width:164px;height:21px;border:1px solid #ccc;border-radius:4px;background:#fff;font-size:13px;line-height:19px;padding-left:3px;color:#333"></div>
<div class="abs " style="left:1262px;top:494px;width:240px;height:1px;background:#eaeaea;"></div>
<div class="t " style="left:1277.3px;top:505px;font-size:14px;color:#666;transform:scaleX(0.9662);transform-origin:0 0;">By Inbound Qty.</div>
<div class="abs" style="left:1277px;top:532px;width:164px;height:21px;border:1px solid #ccc;border-radius:4px;background:#fff;font-size:13px;line-height:19px;padding-left:3px;color:#333"></div>
<div class="abs " style="left:1262px;top:571px;width:240px;height:1px;background:#eaeaea;"></div>
<div class="t " style="left:1277.3px;top:581px;font-size:14px;color:#666;transform:scaleX(0.9678);transform-origin:0 0;">By Outbound Qty.</div>
<div class="abs" style="left:1277px;top:608px;width:164px;height:21px;border:1px solid #ccc;border-radius:4px;background:#fff;font-size:13px;line-height:19px;padding-left:3px;color:#333"></div>
<div class="abs " style="left:1262px;top:647px;width:240px;height:1px;background:#eaeaea;"></div>
<div class="t " style="left:1277.3px;top:657px;font-size:14px;color:#666;transform:scaleX(0.9715);transform-origin:0 0;">By Inventory Avg.</div>
<div class="abs" style="left:1277px;top:684px;width:164px;height:21px;border:1px solid #ccc;border-radius:4px;background:#fff;font-size:13px;line-height:19px;padding-left:3px;color:#333"></div>
<div class="abs " style="left:1262px;top:723px;width:240px;height:1px;background:#eaeaea;"></div>
<div class="t " style="left:1277.3px;top:734px;font-size:14px;color:#666;transform:scaleX(0.9791);transform-origin:0 0;">By Inventory Min.</div>
<div class="abs" style="left:1277px;top:761px;width:164px;height:21px;border:1px solid #ccc;border-radius:4px;background:#fff;font-size:13px;line-height:19px;padding-left:3px;color:#333"></div>
<div class="abs " style="left:1262px;top:800px;width:240px;height:1px;background:#eaeaea;"></div>
<div class="t " style="left:1277.3px;top:810px;font-size:14px;color:#666;transform:scaleX(0.9746);transform-origin:0 0;">By Inventory Max.</div>
<div class="abs" style="left:1277px;top:837px;width:164px;height:21px;border:1px solid #ccc;border-radius:4px;background:#fff;font-size:13px;line-height:19px;padding-left:3px;color:#333"></div>
<div class="t " style="left:1277px;top:233px;font-size:13px;color:#666;font-weight:bold;transform:scaleX(0.9280);transform-origin:0 0;">x Remove</div>
<div class="abs" id="leftedge"></div>
</body></html>
